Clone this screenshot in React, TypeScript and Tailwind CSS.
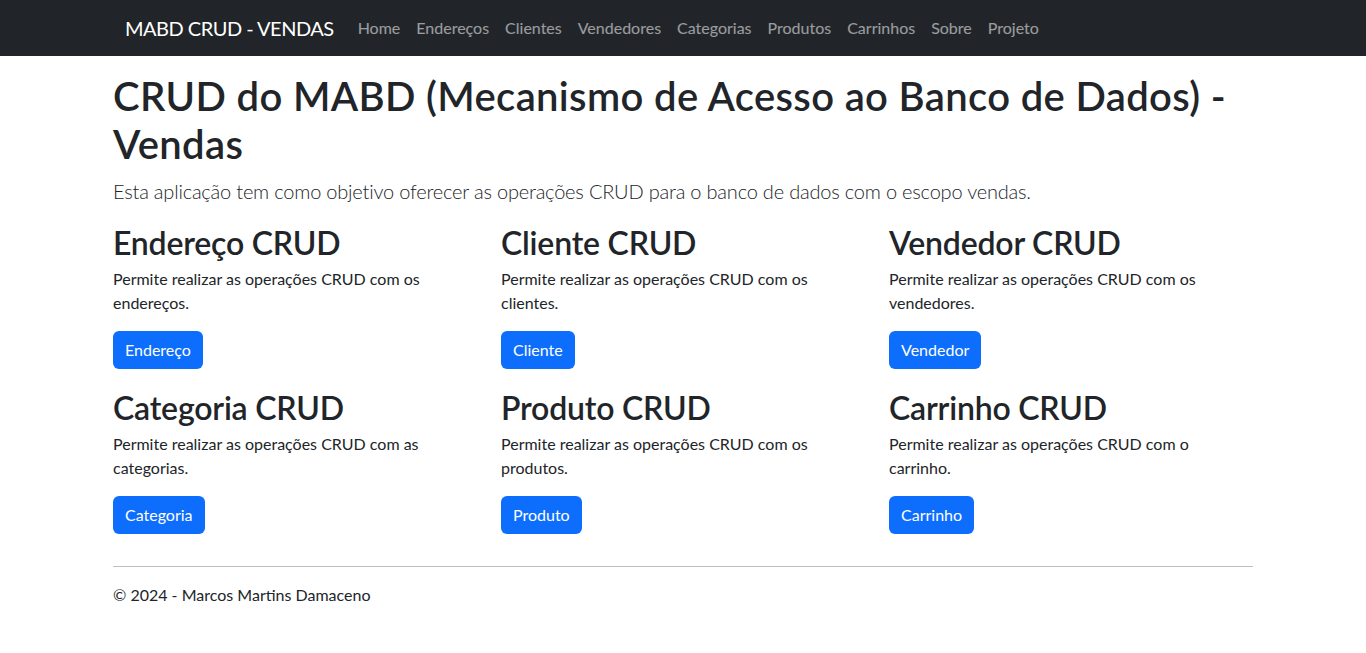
const NAV = ['Home', 'Endereços', 'Clientes', 'Vendedores', 'Categorias', 'Produtos', 'Carrinhos', 'Sobre', 'Projeto'];

const CARDS = [
  { title: 'Endereço CRUD', text: 'Permite realizar as operações CRUD com os endereços.', btn: 'Endereço' },
  { title: 'Cliente CRUD', text: 'Permite realizar as operações CRUD com os clientes.', btn: 'Cliente' },
  { title: 'Vendedor CRUD', text: 'Permite realizar as operações CRUD com os vendedores.', btn: 'Vendedor' },
  { title: 'Categoria CRUD', text: 'Permite realizar as operações CRUD com as categorias.', btn: 'Categoria' },
  { title: 'Produto CRUD', text: 'Permite realizar as operações CRUD com os produtos.', btn: 'Produto' },
  { title: 'Carrinho CRUD', text: 'Permite realizar as operações CRUD com o carrinho.', btn: 'Carrinho' },
];

export default function App() {
  return (
    <div className="min-h-screen bg-white text-[#212529] text-[16px] leading-6" style={{ fontFamily: 'Lato, "Noto Sans", sans-serif' }}>
      {/* Navbar */}
      <nav className="h-14 bg-[#212529]">
        <div className="w-[1164px] mx-auto px-3 h-full flex items-center">
          <div className="ml-3 mr-4 text-[20px] text-white leading-[30px] tracking-[-0.5px]">MABD CRUD - VENDAS</div>
          <ul className="flex">
            {NAV.map((n) => (
              <li key={n}>
                <a className="block px-2 py-2 text-white/55">{n}</a>
              </li>
            ))}
          </ul>
        </div>
      </nav>

      <main className="w-[1164px] mx-auto px-3 pt-4">
        <h1 className="text-[40px] leading-[48px] font-semibold tracking-[0.35px] mb-2">
          CRUD do MABD (Mecanismo de Acesso ao Banco de Dados) - Vendas
        </h1>
        <p className="text-[20px] leading-[30px] font-light tracking-[-0.2px] mb-[18px]">
          Esta aplicação tem como objetivo oferecer as operações CRUD para o banco de dados com o escopo vendas.
        </p>

        <div className="grid grid-cols-3 gap-x-6 gap-y-1">
          {CARDS.map((c) => (
            <div key={c.title} className="mb-4">
              <h2 className="text-[32px] leading-[38px] font-semibold tracking-[-0.2px] mb-[5px]">{c.title}</h2>
              <p className="w-[330px] mb-4">{c.text}</p>
              <button className="h-[38px] px-3 rounded-md bg-[#0d6efd] text-white">{c.btn}</button>
            </div>
          ))}
        </div>

        <hr className="mt-4 border-t border-[#bfbfbf]" />
        <footer className="py-4">© 2024 - Marcos Martins Damaceno</footer>
      </main>
    </div>
  );
}
